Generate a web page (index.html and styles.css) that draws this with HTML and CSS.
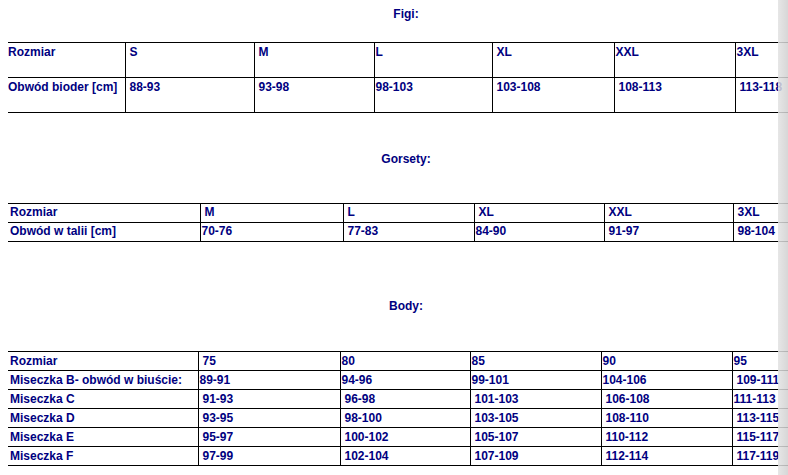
FILE: index.html
```
<!DOCTYPE html>
<html lang="pl">
<head>
<meta charset="utf-8">
<title>Tabela rozmiarów</title>
<link rel="stylesheet" href="styles.css">
</head>
<body>
<div class="page">
  <h2 class="title title-figi">Figi:</h2>
  <table class="sizes figi">
    <colgroup><col><col><col><col><col><col><col></colgroup>
    <tr><td class="head">Rozmiar</td><td class="s">S</td><td class="s">M</td><td>L</td><td class="s">XL</td><td>XXL</td><td>3XL</td></tr>
    <tr><td class="head">Obwód bioder [cm]</td><td class="s">88-93</td><td class="s">93-98</td><td>98-103</td><td class="s">103-108</td><td class="s">108-113</td><td class="s">113-118</td></tr>
  </table>

  <h2 class="title title-gorsety">Gorsety:</h2>
  <table class="sizes gorsety">
    <colgroup><col><col><col><col><col><col></colgroup>
    <tr><td class="head">Rozmiar</td><td class="s">M</td><td class="s">L</td><td class="s">XL</td><td class="s">XXL</td><td class="s">3XL</td></tr>
    <tr><td class="head">Obwód w talii [cm]</td><td>70-76</td><td class="s">77-83</td><td>84-90</td><td class="s">91-97</td><td class="s">98-104</td></tr>
  </table>

  <h2 class="title title-body">Body:</h2>
  <table class="sizes body-t">
    <colgroup><col><col><col><col><col><col></colgroup>
    <tr><td class="head">Rozmiar</td><td class="s">75</td><td>80</td><td>85</td><td>90</td><td>95</td></tr>
    <tr><td class="head">Miseczka B- obwód w biuście:</td><td>89-91</td><td>94-96</td><td>99-101</td><td>104-106</td><td class="s">109-111</td></tr>
    <tr><td class="head">Miseczka C</td><td class="s">91-93</td><td class="s">96-98</td><td class="s">101-103</td><td class="s">106-108</td><td>111-113</td></tr>
    <tr><td class="head">Miseczka D</td><td class="s">93-95</td><td class="s">98-100</td><td class="s">103-105</td><td class="s">108-110</td><td class="s">113-115</td></tr>
    <tr><td class="head">Miseczka E</td><td class="s">95-97</td><td class="s">100-102</td><td class="s">105-107</td><td class="s">110-112</td><td class="s">115-117</td></tr>
    <tr><td class="head">Miseczka F</td><td class="s">97-99</td><td class="s">102-104</td><td class="s">107-109</td><td class="s">112-114</td><td class="s">117-119</td></tr>
  </table>
</div>
<div class="edge"></div>
</body>
</html>
```

FILE: styles.css
```
html, body {
  margin: 0;
  padding: 0;
  background: #ffffff;
  overflow: hidden;
}

body {
  padding-left: 8px;
  font-family: "Liberation Sans", Arial, sans-serif;
  font-weight: bold;
  font-size: 12px;
  line-height: 14px;
  color: #000080;
}

.page {
  width: 796px;
}

.title {
  margin: 0;
  font-size: 12px;
  line-height: 14px;
  font-weight: bold;
  text-align: center;
}

.title-figi { padding-top: 7px; }
.title-gorsety { margin-top: 39px; }
.title-body { margin-top: 57px; }

.sizes {
  width: 796px;
  table-layout: fixed;
  border-collapse: collapse;
  border-spacing: 0;
}

.figi { margin-top: 21px; }
.gorsety { margin-top: 37px; }
.body-t { margin-top: 38px; }

.sizes td {
  border-top: 1px solid #000;
  border-bottom: 1px solid #000;
  border-left: 1px solid #000;
  padding: 2px 0 2px 1px;
  vertical-align: top;
  white-space: nowrap;
  overflow: visible;
}

.sizes td:first-child {
  border-left: none;
}

.sizes td.s {
  padding-left: 4px;
}

/* Figi */
.figi td { padding-top: 2px; padding-bottom: 18px; }
.figi td.head { padding-left: 0; }
.figi col:nth-child(1) { width: 117px; }
.figi col:nth-child(2) { width: 129px; }
.figi col:nth-child(3) { width: 120px; }
.figi col:nth-child(4) { width: 118px; }
.figi col:nth-child(5) { width: 122px; }
.figi col:nth-child(6) { width: 121px; }
.figi col:nth-child(7) { width: 69px; }

/* Gorsety */
.gorsety td { padding-top: 1px; padding-bottom: 3px; }
.gorsety td.head { padding-left: 2px; }
.gorsety col:nth-child(1) { width: 192px; }
.gorsety col:nth-child(2) { width: 143px; }
.gorsety col:nth-child(3) { width: 131px; }
.gorsety col:nth-child(4) { width: 130px; }
.gorsety col:nth-child(5) { width: 129px; }
.gorsety col:nth-child(6) { width: 71px; }

/* Body */
.body-t td { padding-top: 2px; padding-bottom: 2px; }
.body-t td.head { padding-left: 2px; }
.body-t col:nth-child(1) { width: 190px; }
.body-t col:nth-child(2) { width: 142px; }
.body-t col:nth-child(3) { width: 130px; }
.body-t col:nth-child(4) { width: 131px; }
.body-t col:nth-child(5) { width: 131px; }
.body-t col:nth-child(6) { width: 72px; }

.edge {
  position: fixed;
  top: 0;
  right: 0;
  width: 10px;
  height: 100%;
  background: linear-gradient(to right, rgba(226, 226, 226, 0.85), rgba(208, 208, 208, 0.85));
}
```
